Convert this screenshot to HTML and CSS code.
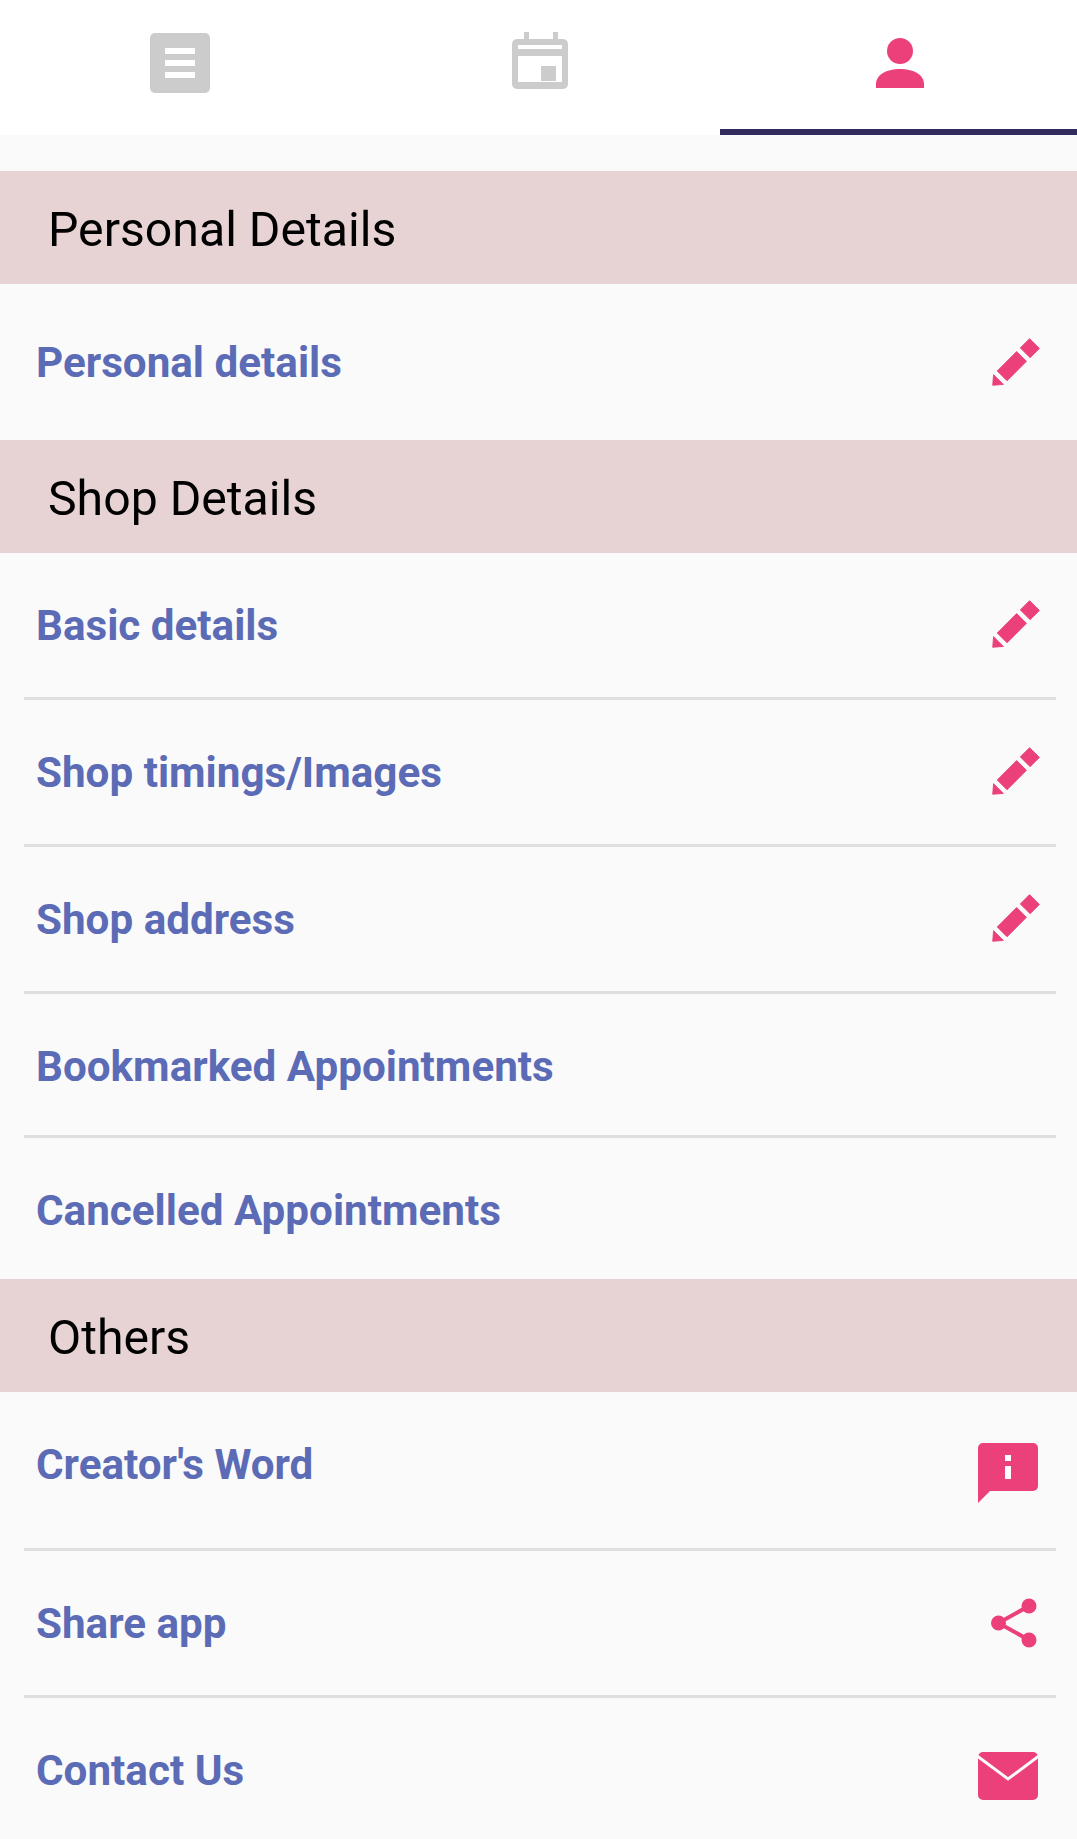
FILE: index.html
```html
<!DOCTYPE html>
<html lang="en">
<head>
    <meta charset="UTF-8">
    <title>Profile</title>
    <link rel="stylesheet" href="styles.css">
</head>
<body>
    <!-- tabs -->
    <div class="tabs">
        <div class="tab">
            <svg class="tab-icon" width="60" height="60" viewBox="0 0 60 60">
                <path fill="#cccccc" d="M5 0h50a5 5 0 0 1 5 5v50a5 5 0 0 1-5 5H5a5 5 0 0 1-5-5V5a5 5 0 0 1 5-5z"/>
                <path fill="#ffffff" d="M15 15h30v6H15zM15 27h30v6H15zM15 39h30v6H15z"/>
            </svg>
        </div>
        <div class="tab">
            <svg class="tab-icon calendar" width="56" height="57" viewBox="0 0 56 57">
                <path fill="#cccccc" fill-rule="evenodd" d="M12 0h5v7h24V0h5v7h5a5 5 0 0 1 5 5v40a5 5 0 0 1-5 5H5a5 5 0 0 1-5-5V12a5 5 0 0 1 5-5h7zM6 13v4h44v-4zM6 24v26h44V24z"/>
                <path fill="#cccccc" d="M29 34h15v15H29z"/>
            </svg>
        </div>
        <div class="tab active">
            <svg class="tab-icon" width="48" height="50" viewBox="0 0 48 50">
                <circle fill="#ec407a" cx="24" cy="13" r="13"/>
                <path fill="#ec407a" d="M0 50v-4C0 36 12 31 24 31s24 5 24 15v4z"/>
            </svg>
        </div>
    </div>

    <div class="gap"></div>

    <h2 class="section">Personal Details</h2>
    <div class="row first">
        <span class="label">Personal details</span>
        <svg class="icon pen" width="48" height="48" viewBox="0 0 52 52"><use href="#pencil"/></svg>
    </div>

    <h2 class="section">Shop Details</h2>
    <div class="row line">
        <span class="label">Basic details</span>
        <svg class="icon pen" width="48" height="48" viewBox="0 0 52 52"><use href="#pencil"/></svg>
    </div>
    <div class="row line">
        <span class="label">Shop timings/Images</span>
        <svg class="icon pen" width="48" height="48" viewBox="0 0 52 52"><use href="#pencil"/></svg>
    </div>
    <div class="row line">
        <span class="label">Shop address</span>
        <svg class="icon pen" width="48" height="48" viewBox="0 0 52 52"><use href="#pencil"/></svg>
    </div>
    <div class="row line low">
        <span class="label">Bookmarked Appointments</span>
    </div>
    <div class="row low end">
        <span class="label">Cancelled Appointments</span>
    </div>

    <h2 class="section">Others</h2>
    <div class="row line word">
        <span class="label">Creator's Word</span>
        <svg class="icon info" width="60" height="60" viewBox="0 0 60 60">
            <path fill="#ec407a" d="M5 0h50a5 5 0 0 1 5 5v38a5 5 0 0 1-5 5H12L0 60V5a5 5 0 0 1 5-5z"/>
            <path fill="#ffffff" d="M27 12h6v6h-6zM27 23h6v13h-6z"/>
        </svg>
    </div>
    <div class="row line">
        <span class="label">Share app</span>
        <svg class="icon share" width="46" height="50" viewBox="0 0 46 50">
            <g fill="#ec407a">
                <circle cx="38" cy="8" r="7.5"/>
                <circle cx="7.5" cy="25" r="7.5"/>
                <circle cx="38" cy="42" r="7.5"/>
            </g>
            <path fill="none" stroke="#ec407a" stroke-width="4" d="M38 8L7.5 25 38 42"/>
        </svg>
    </div>
    <div class="row low end">
        <span class="label">Contact Us</span>
        <svg class="icon mail" width="60" height="48" viewBox="0 0 60 48">
            <rect fill="#ec407a" width="60" height="48" rx="5"/>
            <path fill="none" stroke="#fafafa" stroke-width="3" d="M-1 4l31 23L61 4"/>
        </svg>
    </div>

    <!-- shared pencil -->
    <svg class="defs" width="0" height="0">
        <defs>
            <g id="pencil" fill="#ec407a" stroke="#ec407a" stroke-width="1" stroke-linejoin="round">
                <path d="M30.7 10.7l10-10 10.6 10.6-10 10z"/>
                <path d="M26.7 14.7l10.6 10.6-21 21L5.7 35.7z"/>
                <path d="M1.7 39.7l10.6 10.6L.8 51.2z"/>
            </g>
        </defs>
    </svg>
</body>
</html>
```

FILE: styles.css
```css
body {
    margin: 0;
    background-color: #fafafa;
    font-family: Roboto, "Liberation Sans", sans-serif;
}

/* third tab runs a little past the screen edge */
.tabs {
    display: flex;
    height: 135px;
    overflow: hidden;
    background-color: #ffffff;
}

.tab {
    flex: none;
    width: 360px;
    display: flex;
    align-items: center;
    justify-content: center;
    padding-bottom: 9px;
    box-sizing: border-box;
}

.tab.active {
    border-bottom: 6px solid #312c5e;
    padding-bottom: 3px;
}

.tab-icon {
    filter: blur(0.5px);
}

.tab-icon.calendar {
    margin-bottom: 5px;
}

.gap {
    height: 36px;
}

.section {
    display: flex;
    align-items: center;
    height: 113px;
    margin: 0;
    padding: 4px 0 0 48px;
    box-sizing: border-box;
    background-color: #e7d3d3;
    color: #000000;
    font-size: 48.2px;
    font-weight: 400;
}

.row {
    position: relative;
    display: flex;
    align-items: center;
    justify-content: space-between;
    height: 147px;
    padding: 0 36px;
    box-sizing: border-box;
}

.row.first {
    height: 156px;
}

.row.word {
    height: 159px;
}

.row.low {
    height: 144px;
}

.row.end {
    height: 141px;
}

/* divider does not reach the screen edge */
.row.line::after {
    content: "";
    position: absolute;
    left: 24px;
    right: 21px;
    bottom: 0;
    height: 3px;
    background-color: #dfdfdf;
}

.label {
    color: #5c6bb5;
    font-size: 42.2px;
    font-weight: 700;
    padding-bottom: 2px;
}

.row.first .label {
    padding-bottom: 0;
}

.row.word .label {
    padding-bottom: 15px;
}

.row.low .label {
    padding-bottom: 0;
}

.row.end .label {
    padding-top: 4px;
}

.icon {
    flex: none;
    margin-bottom: 5px;
    filter: blur(0.5px);
}

.icon.pen {
    margin-right: 1px;
}

.row.first .icon {
    margin-bottom: 1px;
}

.icon.info {
    margin: 3px 3px 0 0;
}

.icon.share {
    margin: 0 4px 3px 0;
}

.icon.mail {
    margin: 15px 3px 0 0;
}

.defs {
    position: absolute;
}
```
